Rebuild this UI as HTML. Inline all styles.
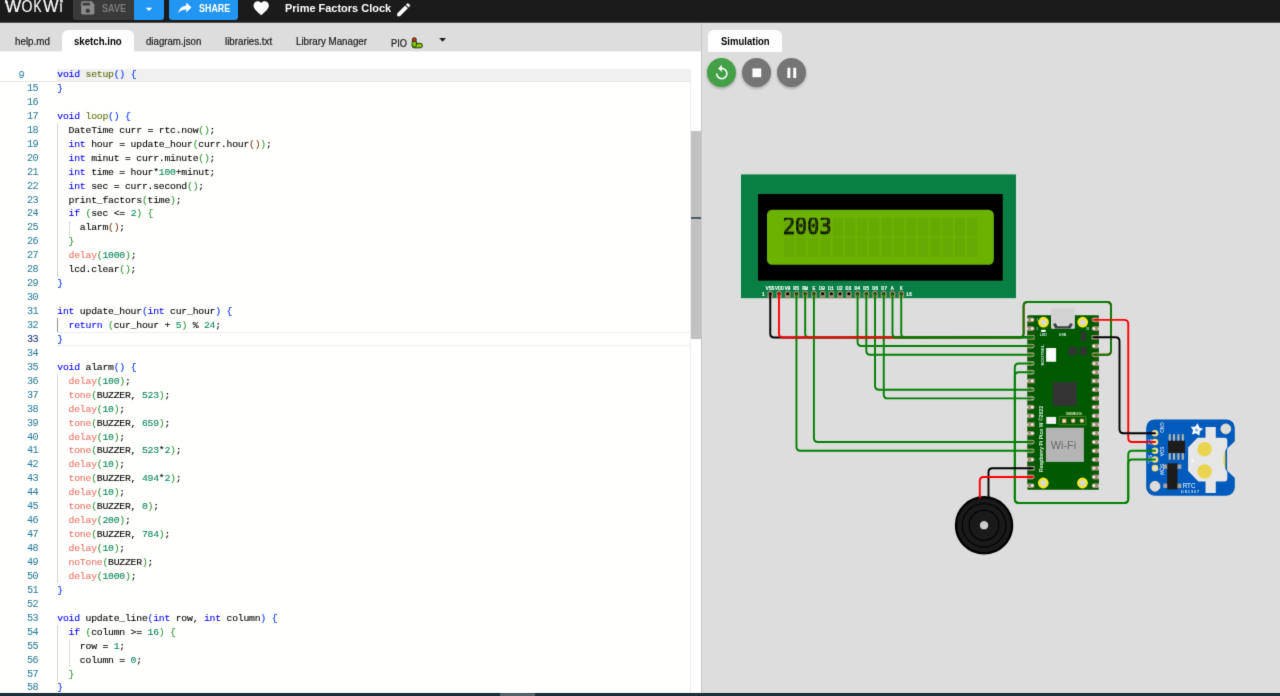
<!DOCTYPE html>
<html lang="en">
<head>
<meta charset="utf-8">
<title>Prime Factors Clock - Wokwi Simulator</title>
<style>
*{box-sizing:border-box}
html,body{margin:0;padding:0;overflow:hidden}
body{width:1280px;height:696px;overflow:hidden;position:relative;background:#fffffe;font-family:"Liberation Sans",sans-serif;color:#000}
#page{position:absolute;left:0;top:0;width:1280px;height:696px;overflow:hidden;filter:url(#soft)}
.abs{position:absolute}
#hdr{left:0;top:0;width:1280px;height:23px;background:#1b1b1b;overflow:hidden;border-bottom:1px solid #4c4c4c}
.btn{top:0;height:19.8px;color:#fff;font-size:10.3px;font-weight:bold;line-height:16px;white-space:nowrap}
#save{left:73.2px;width:60.6px;background:#3a3a3a;border-radius:0 0 0 3px;color:#7b7b7b}
#savedd{left:133.8px;width:29.8px;background:#2196f3;border-radius:0 0 3px 0}
#share{left:169.4px;width:68.6px;background:#2196f3;border-radius:0 0 3px 3px}
#title{left:285.3px;top:0.2px;color:#fff;font-size:11.4px;font-weight:bold;line-height:17px;white-space:nowrap;transform:scaleX(0.963);transform-origin:0 0}
#tabs{left:0;top:23px;width:1280px;height:28px;background:#dddddd;border-top:1px solid #e6e6e6}
.tab{top:30px;height:21.2px}
.tt{-webkit-text-stroke:0.2px;top:32.3px;font-size:10.3px;line-height:20px;color:#1a1a1a;white-space:nowrap;transform-origin:0 0}
.tab.on{background:#fff;border-radius:6px 6px 0 0;height:21.5px;font-weight:bold;color:#000}
#ed{left:0;top:51px;width:701px;height:642px;background:#fffffe;overflow:hidden}
#simbg{left:701px;top:23px;width:579px;height:670px;background:#dddddd;border-left:1px solid #c6c6c6;border-top:1px solid #e6e6e6}
.mono,.ln,.cl,#stk{font-family:"Liberation Mono","DejaVu Sans Mono",monospace;font-size:9.8px;letter-spacing:-0.24px}
.ln{font-size:10.2px;letter-spacing:-0.48px}
.ln{position:absolute;left:0;width:38.2px;text-align:right;color:#237893;height:13.93px;line-height:13.93px;white-space:pre}
.ln.act{color:#0b216f}
.cl{-webkit-text-stroke:0.1px;position:absolute;left:57.3px;height:13.93px;line-height:13.93px;white-space:pre;color:#000}
.k{color:#0000ff}.a{color:#e97366}.o{color:#5e6d03}.n{color:#098658}
.b1{color:#0431fa}.b2{color:#319331}.b3{color:#7b3814}
.ig{position:absolute;width:1px;background:#d8d8d8}
.ig.iga{background:#939393}
#bot{left:0;top:693px;width:1280px;height:3px;background:#1c313a;border-top:1px solid #10252e}
</style>
</head>
<body>
<svg width="0" height="0" style="position:absolute"><defs><filter id="soft" x="0" y="0" width="100%" height="100%" color-interpolation-filters="sRGB"><feConvolveMatrix order="3" kernelMatrix="0.01134 0.08382 0.01134 0.08382 0.61935 0.08382 0.01134 0.08382 0.01134" divisor="1" edgeMode="duplicate" preserveAlpha="true"/></filter></defs></svg>
<div id="page">
<!-- editor -->
<div id="ed" class="abs"></div>
<div class="abs" style="left:57px;top:332px;width:644px;height:14px;border-top:1px solid #eee;border-bottom:1px solid #eee"></div>
<div class="ig" style="left:57.30px;top:123.25px;height:153.34px"></div>
<div class="ig" style="left:68.58px;top:220.83px;height:13.94px"></div>
<div class="ig iga" style="left:57.30px;top:318.41px;height:13.94px"></div>
<div class="ig" style="left:57.30px;top:374.17px;height:209.10px"></div>
<div class="ig" style="left:57.30px;top:625.09px;height:55.76px"></div>
<div class="ig" style="left:68.58px;top:639.03px;height:27.88px"></div>
<div class="ln" style="top:82.03px">15</div>
<div class="cl" style="top:82.03px"><span class="b1">}</span></div>
<div class="ln" style="top:95.97px">16</div>
<div class="ln" style="top:109.91px">17</div>
<div class="cl" style="top:109.91px"><span class="k">void</span> <span class="o">loop</span><span class="b1">(</span><span class="b1">)</span> <span class="b1">{</span></div>
<div class="ln" style="top:123.85px">18</div>
<div class="cl" style="top:123.85px">  DateTime curr = rtc.now<span class="b2">(</span><span class="b2">)</span>;</div>
<div class="ln" style="top:137.79px">19</div>
<div class="cl" style="top:137.79px">  <span class="k">int</span> hour = update_hour<span class="b2">(</span>curr.hour<span class="b3">(</span><span class="b3">)</span><span class="b2">)</span>;</div>
<div class="ln" style="top:151.73px">20</div>
<div class="cl" style="top:151.73px">  <span class="k">int</span> minut = curr.minute<span class="b2">(</span><span class="b2">)</span>;</div>
<div class="ln" style="top:165.67px">21</div>
<div class="cl" style="top:165.67px">  <span class="k">int</span> time = hour*<span class="n">100</span>+minut;</div>
<div class="ln" style="top:179.61px">22</div>
<div class="cl" style="top:179.61px">  <span class="k">int</span> sec = curr.second<span class="b2">(</span><span class="b2">)</span>;</div>
<div class="ln" style="top:193.55px">23</div>
<div class="cl" style="top:193.55px">  print_factors<span class="b2">(</span>time<span class="b2">)</span>;</div>
<div class="ln" style="top:207.49px">24</div>
<div class="cl" style="top:207.49px">  <span class="k">if</span> <span class="b2">(</span>sec &lt;= <span class="n">2</span><span class="b2">)</span> <span class="b2">{</span></div>
<div class="ln" style="top:221.43px">25</div>
<div class="cl" style="top:221.43px">    alarm<span class="b3">(</span><span class="b3">)</span>;</div>
<div class="ln" style="top:235.37px">26</div>
<div class="cl" style="top:235.37px">  <span class="b2">}</span></div>
<div class="ln" style="top:249.31px">27</div>
<div class="cl" style="top:249.31px">  <span class="a">delay</span><span class="b2">(</span><span class="n">1000</span><span class="b2">)</span>;</div>
<div class="ln" style="top:263.25px">28</div>
<div class="cl" style="top:263.25px">  lcd.clear<span class="b2">(</span><span class="b2">)</span>;</div>
<div class="ln" style="top:277.19px">29</div>
<div class="cl" style="top:277.19px"><span class="b1">}</span></div>
<div class="ln" style="top:291.13px">30</div>
<div class="ln" style="top:305.07px">31</div>
<div class="cl" style="top:305.07px"><span class="k">int</span> update_hour<span class="b1">(</span><span class="k">int</span> cur_hour<span class="b1">)</span> <span class="b1">{</span></div>
<div class="ln" style="top:319.01px">32</div>
<div class="cl" style="top:319.01px">  <span class="k">return</span> <span class="b2">(</span>cur_hour + <span class="n">5</span><span class="b2">)</span> % <span class="n">24</span>;</div>
<div class="ln act" style="top:332.95px">33</div>
<div class="cl" style="top:332.95px"><span class="b1">}</span></div>
<div class="ln" style="top:346.89px">34</div>
<div class="ln" style="top:360.83px">35</div>
<div class="cl" style="top:360.83px"><span class="k">void</span> alarm<span class="b1">(</span><span class="b1">)</span> <span class="b1">{</span></div>
<div class="ln" style="top:374.77px">36</div>
<div class="cl" style="top:374.77px">  <span class="a">delay</span><span class="b2">(</span><span class="n">100</span><span class="b2">)</span>;</div>
<div class="ln" style="top:388.71px">37</div>
<div class="cl" style="top:388.71px">  <span class="a">tone</span><span class="b2">(</span>BUZZER, <span class="n">523</span><span class="b2">)</span>;</div>
<div class="ln" style="top:402.65px">38</div>
<div class="cl" style="top:402.65px">  <span class="a">delay</span><span class="b2">(</span><span class="n">10</span><span class="b2">)</span>;</div>
<div class="ln" style="top:416.59px">39</div>
<div class="cl" style="top:416.59px">  <span class="a">tone</span><span class="b2">(</span>BUZZER, <span class="n">659</span><span class="b2">)</span>;</div>
<div class="ln" style="top:430.53px">40</div>
<div class="cl" style="top:430.53px">  <span class="a">delay</span><span class="b2">(</span><span class="n">10</span><span class="b2">)</span>;</div>
<div class="ln" style="top:444.47px">41</div>
<div class="cl" style="top:444.47px">  <span class="a">tone</span><span class="b2">(</span>BUZZER, <span class="n">523</span>*<span class="n">2</span><span class="b2">)</span>;</div>
<div class="ln" style="top:458.41px">42</div>
<div class="cl" style="top:458.41px">  <span class="a">delay</span><span class="b2">(</span><span class="n">10</span><span class="b2">)</span>;</div>
<div class="ln" style="top:472.35px">43</div>
<div class="cl" style="top:472.35px">  <span class="a">tone</span><span class="b2">(</span>BUZZER, <span class="n">494</span>*<span class="n">2</span><span class="b2">)</span>;</div>
<div class="ln" style="top:486.29px">44</div>
<div class="cl" style="top:486.29px">  <span class="a">delay</span><span class="b2">(</span><span class="n">10</span><span class="b2">)</span>;</div>
<div class="ln" style="top:500.23px">45</div>
<div class="cl" style="top:500.23px">  <span class="a">tone</span><span class="b2">(</span>BUZZER, <span class="n">0</span><span class="b2">)</span>;</div>
<div class="ln" style="top:514.17px">46</div>
<div class="cl" style="top:514.17px">  <span class="a">delay</span><span class="b2">(</span><span class="n">200</span><span class="b2">)</span>;</div>
<div class="ln" style="top:528.11px">47</div>
<div class="cl" style="top:528.11px">  <span class="a">tone</span><span class="b2">(</span>BUZZER, <span class="n">784</span><span class="b2">)</span>;</div>
<div class="ln" style="top:542.05px">48</div>
<div class="cl" style="top:542.05px">  <span class="a">delay</span><span class="b2">(</span><span class="n">10</span><span class="b2">)</span>;</div>
<div class="ln" style="top:555.99px">49</div>
<div class="cl" style="top:555.99px">  <span class="a">noTone</span><span class="b2">(</span>BUZZER<span class="b2">)</span>;</div>
<div class="ln" style="top:569.93px">50</div>
<div class="cl" style="top:569.93px">  <span class="a">delay</span><span class="b2">(</span><span class="n">1000</span><span class="b2">)</span>;</div>
<div class="ln" style="top:583.87px">51</div>
<div class="cl" style="top:583.87px"><span class="b1">}</span></div>
<div class="ln" style="top:597.81px">52</div>
<div class="ln" style="top:611.75px">53</div>
<div class="cl" style="top:611.75px"><span class="k">void</span> update_line<span class="b1">(</span><span class="k">int</span> row, <span class="k">int</span> column<span class="b1">)</span> <span class="b1">{</span></div>
<div class="ln" style="top:625.69px">54</div>
<div class="cl" style="top:625.69px">  <span class="k">if</span> <span class="b2">(</span>column &gt;= <span class="n">16</span><span class="b2">)</span> <span class="b2">{</span></div>
<div class="ln" style="top:639.63px">55</div>
<div class="cl" style="top:639.63px">    row = <span class="n">1</span>;</div>
<div class="ln" style="top:653.57px">56</div>
<div class="cl" style="top:653.57px">    column = <span class="n">0</span>;</div>
<div class="ln" style="top:667.51px">57</div>
<div class="cl" style="top:667.51px">  <span class="b2">}</span></div>
<div class="ln" style="top:681.45px">58</div>
<div class="cl" style="top:681.45px"><span class="b1">}</span></div>
<!-- sticky scroll -->
<div class="abs" style="left:0;top:51px;width:701px;height:17.4px;background:#fff"></div>
<div class="abs" style="left:0;top:68.3px;width:690.3px;height:13.6px;background:#fffffe;border-bottom:1px solid #e4e4e4"></div>
<div class="abs" style="left:57.3px;top:69.2px;width:633px;height:12.3px;background:#f0f0f0"></div>
<div class="ln" style="left:0;width:24.2px;top:68.9px">9</div>
<div class="cl" id="stk" style="top:67.9px"><span class="k">void</span> <span class="o">setup</span><span class="b1">(</span><span class="b1">)</span> <span class="b1">{</span></div>
<!-- scrollbar -->
<div class="abs" style="left:690px;top:69px;width:11px;height:624px;background:#fff;border-left:1px solid #ededed"></div>
<div class="abs" style="left:691px;top:131px;width:10px;height:208px;background:#c1c1c1"></div>
<div class="abs" style="left:691px;top:217px;width:10px;height:2px;background:#4b5a60"></div>

<div class="abs" style="left:0;top:51px;width:62px;height:1px;background:#f0f0f0"></div>
<div class="abs" style="left:134px;top:51px;width:567px;height:1px;background:#f0f0f0"></div>
<!-- header -->
<div id="hdr" class="abs">
  <svg class="abs" style="left:0;top:0" width="70" height="22" viewBox="0 0 70 22" font-family="Liberation Sans, sans-serif" font-size="16.8" fill="#fff" stroke="#fff" stroke-width="0.15">
    <text y="12.3"><tspan x="5" textLength="16.18" lengthAdjust="spacingAndGlyphs">W</tspan><tspan x="21.4" textLength="10.98" lengthAdjust="spacingAndGlyphs">O</tspan><tspan x="33.6" textLength="8.07" lengthAdjust="spacingAndGlyphs">K</tspan><tspan x="43.3" textLength="15.22" lengthAdjust="spacingAndGlyphs">W</tspan><tspan x="59.6" textLength="2.98" lengthAdjust="spacingAndGlyphs">i</tspan></text>
    <g stroke="none" fill="#e8e8e8"><circle cx="6.3" cy="1.9" r="1.5"/><circle cx="9.3" cy="11" r="1.5"/><circle cx="13.2" cy="1.3" r="1.3"/><circle cx="16.3" cy="10.3" r="1.4"/><circle cx="61.5" cy="1.3" r="1.4"/></g>
  </svg>
  <div id="save" class="abs btn">
    <svg class="abs" style="left:5.5px;top:-0.6px" width="17.6" height="17.6" viewBox="0 0 24 24"><path fill="#8c8c8c" d="M17 3H5c-1.11 0-2 .9-2 2v14c0 1.1.89 2 2 2h14c1.1 0 2-.9 2-2V7l-4-4zm-5 16c-1.66 0-3-1.34-3-3s1.34-3 3-3 3 1.34 3 3-1.34 3-3 3zm3-10H5V5h10v4z"/></svg>
    <span class="abs" style="left:28.6px;top:0.6px;font-size:10.1px;transform:scaleX(0.905);transform-origin:0 0">SAVE</span>
  </div>
  <div id="savedd" class="abs btn">
    <svg class="abs" style="left:7.4px;top:0.7px" width="16" height="16" viewBox="0 0 24 24"><path fill="#fff" d="M7 10l5 5 5-5z"/></svg>
  </div>
  <div id="share" class="abs btn">
    <svg class="abs" style="left:6.2px;top:-1.2px" width="17.6" height="17" viewBox="0 0 24 24" preserveAspectRatio="none"><path fill="#fff" transform="translate(24,0) scale(-1,1)" d="M10 9V5l-7 7 7 7v-4.1c5 0 8.5 1.6 11 5.1-1-5-4-10-11-11z"/></svg>
    <span class="abs" style="left:30.1px;top:0.6px;font-size:10.1px;transform:scaleX(0.885);transform-origin:0 0">SHARE</span>
  </div>
  <svg class="abs" style="left:252.2px;top:-0.9px" width="18.4" height="18.4" viewBox="0 0 24 24"><path fill="#fff" d="M12 21.35l-1.45-1.32C5.4 15.36 2 12.28 2 8.5 2 5.42 4.42 3 7.5 3c1.74 0 3.41.81 4.5 2.09C13.09 3.81 14.76 3 16.5 3 19.58 3 22 5.42 22 8.5c0 3.78-3.4 6.86-8.55 11.54L12 21.35z"/></svg>
  <div id="title" class="abs">Prime Factors Clock</div>
  <svg class="abs" style="left:394.8px;top:0.6px" width="17.4" height="17.4" viewBox="0 0 24 24"><path fill="#fff" d="M3 17.25V21h3.75L17.81 9.94l-3.75-3.75L3 17.25zM20.71 7.04c.39-.39.39-1.02 0-1.41l-2.34-2.34c-.39-.39-1.02-.39-1.41 0l-1.83 1.83 3.75 3.75 1.83-1.83z"/></svg>
</div>

<!-- tab bar -->
<div id="tabs" class="abs"></div>
<div id="simbg" class="abs"></div>
<div class="tab on abs" style="left:61.8px;width:72.2px"></div>
<div class="tt abs" style="left:15.1px;transform:scaleX(0.955)">help.md</div>
<div class="tt abs" style="left:73.9px;font-weight:bold;color:#000;-webkit-text-stroke:0;transform:scaleX(0.938)">sketch.ino</div>
<div class="tt abs" style="left:145.6px;transform:scaleX(0.938)">diagram.json</div>
<div class="tt abs" style="left:225.1px;transform:scaleX(0.946)">libraries.txt</div>
<div class="tt abs" style="left:295.5px;transform:scaleX(0.947)">Library Manager</div>
<div class="tt abs" style="left:390.6px;top:33.6px;transform:scaleX(0.896)">PIO</div>
<svg class="abs" style="left:410px;top:36px" width="14" height="14" viewBox="410 36 14 14">
  <g stroke="#1d2a08" stroke-width="0.9" stroke-linejoin="round">
  <rect x="412.1" y="43.3" width="10.3" height="4.5" rx="2.2" fill="#76c205"/>
  <rect x="412.1" y="40" width="4.3" height="7" rx="2.1" fill="#76c205"/>
  <circle cx="414.3" cy="39.7" r="2" fill="#e3241b"/>
  </g>
  <rect x="412.6" y="41.9" width="3.3" height="4.6" rx="1.6" fill="#76c205"/>
  <circle cx="417.6" cy="45.8" r="0.6" fill="#d7e84a"/><circle cx="420" cy="45.6" r="0.6" fill="#d7e84a"/><circle cx="414.4" cy="43.2" r="0.5" fill="#d7e84a"/>
</svg>
<svg class="abs" style="left:438px;top:37px" width="10" height="6" viewBox="0 0 10 6"><path d="M1.2 0.9h6.8L4.6 4.7z" fill="#1c1c1c"/></svg>
<div class="tab on abs" style="left:707.8px;width:74.4px"></div>
<div class="tt abs" style="left:721.2px;top:32.4px;font-weight:bold;color:#000;-webkit-text-stroke:0;transform:scaleX(0.925)">Simulation</div>

<!-- sim buttons -->
<div class="abs" style="left:707px;top:58.1px;width:29px;height:29px;border-radius:50%;background:#43a047;box-shadow:0 1.5px 3px rgba(0,0,0,.28)">
  <svg class="abs" style="left:5.7px;top:6px" width="17.6" height="17.6" viewBox="0 0 24 24"><path fill="#fff" d="M12 5V1L7 6l5 5V7c3.31 0 6 2.69 6 6s-2.69 6-6 6-6-2.69-6-6H4c0 4.42 3.58 8 8 8s8-3.58 8-8-3.58-8-8-8z"/></svg>
</div>
<div class="abs" style="left:742.1px;top:58.1px;width:29px;height:29px;border-radius:50%;background:#757575;box-shadow:0 1.5px 3px rgba(0,0,0,.28)">
  <svg class="abs" style="left:5.7px;top:5.7px" width="17.6" height="17.6" viewBox="0 0 24 24"><path fill="#fff" d="M6 6h12v12H6z"/></svg>
</div>
<div class="abs" style="left:777.2px;top:58.1px;width:29px;height:29px;border-radius:50%;background:#757575;box-shadow:0 1.5px 3px rgba(0,0,0,.28)">
  <svg class="abs" style="left:5.7px;top:5.7px" width="17.6" height="17.6" viewBox="0 0 24 24"><path fill="#fff" d="M6 19h4V5H6v14zm8-14v14h4V5h-4z"/></svg>
</div>

<svg class="abs" style="left:702px;top:52px" width="578" height="641" viewBox="702 52 578 641">
<defs><pattern id="lcdcells" width="3.55" height="5.95" patternUnits="userSpaceOnUse" x="12.45" y="12.55"><rect width="2.95" height="5.55" fill="#000" fill-opacity="0.05"/></pattern></defs>
<g transform="translate(741.0,174.4) scale(3.4375)">
<rect width="80" height="36" fill="#087f45"/>
<rect x="4.95" y="5.7" width="71.2" height="25.2" fill="#000"/>
<rect x="7.55" y="10.3" width="66" height="16" rx="1.5" ry="1.5" fill="#6cb201"/>
<rect x="12.45" y="12.55" width="56.2" height="11.5" fill="url(#lcdcells)"/>
<defs><pattern id="lcddots" width="3.55" height="5.95" patternUnits="userSpaceOnUse" x="12.45" y="12.55"><rect x="0.030" y="0.030" width="0.53" height="0.63" fill="#fff"/><rect x="0.620" y="0.030" width="0.53" height="0.63" fill="#fff"/><rect x="1.210" y="0.030" width="0.53" height="0.63" fill="#fff"/><rect x="1.800" y="0.030" width="0.53" height="0.63" fill="#fff"/><rect x="2.390" y="0.030" width="0.53" height="0.63" fill="#fff"/><rect x="0.030" y="0.724" width="0.53" height="0.63" fill="#fff"/><rect x="0.620" y="0.724" width="0.53" height="0.63" fill="#fff"/><rect x="1.210" y="0.724" width="0.53" height="0.63" fill="#fff"/><rect x="1.800" y="0.724" width="0.53" height="0.63" fill="#fff"/><rect x="2.390" y="0.724" width="0.53" height="0.63" fill="#fff"/><rect x="0.030" y="1.418" width="0.53" height="0.63" fill="#fff"/><rect x="0.620" y="1.418" width="0.53" height="0.63" fill="#fff"/><rect x="1.210" y="1.418" width="0.53" height="0.63" fill="#fff"/><rect x="1.800" y="1.418" width="0.53" height="0.63" fill="#fff"/><rect x="2.390" y="1.418" width="0.53" height="0.63" fill="#fff"/><rect x="0.030" y="2.112" width="0.53" height="0.63" fill="#fff"/><rect x="0.620" y="2.112" width="0.53" height="0.63" fill="#fff"/><rect x="1.210" y="2.112" width="0.53" height="0.63" fill="#fff"/><rect x="1.800" y="2.112" width="0.53" height="0.63" fill="#fff"/><rect x="2.390" y="2.112" width="0.53" height="0.63" fill="#fff"/><rect x="0.030" y="2.806" width="0.53" height="0.63" fill="#fff"/><rect x="0.620" y="2.806" width="0.53" height="0.63" fill="#fff"/><rect x="1.210" y="2.806" width="0.53" height="0.63" fill="#fff"/><rect x="1.800" y="2.806" width="0.53" height="0.63" fill="#fff"/><rect x="2.390" y="2.806" width="0.53" height="0.63" fill="#fff"/><rect x="0.030" y="3.500" width="0.53" height="0.63" fill="#fff"/><rect x="0.620" y="3.500" width="0.53" height="0.63" fill="#fff"/><rect x="1.210" y="3.500" width="0.53" height="0.63" fill="#fff"/><rect x="1.800" y="3.500" width="0.53" height="0.63" fill="#fff"/><rect x="2.390" y="3.500" width="0.53" height="0.63" fill="#fff"/><rect x="0.030" y="4.194" width="0.53" height="0.63" fill="#fff"/><rect x="0.620" y="4.194" width="0.53" height="0.63" fill="#fff"/><rect x="1.210" y="4.194" width="0.53" height="0.63" fill="#fff"/><rect x="1.800" y="4.194" width="0.53" height="0.63" fill="#fff"/><rect x="2.390" y="4.194" width="0.53" height="0.63" fill="#fff"/><rect x="0.030" y="4.888" width="0.53" height="0.63" fill="#fff"/><rect x="0.620" y="4.888" width="0.53" height="0.63" fill="#fff"/><rect x="1.210" y="4.888" width="0.53" height="0.63" fill="#fff"/><rect x="1.800" y="4.888" width="0.53" height="0.63" fill="#fff"/><rect x="2.390" y="4.888" width="0.53" height="0.63" fill="#fff"/></pattern>
<mask id="lcdmask" maskUnits="userSpaceOnUse" x="12" y="12" width="58" height="13"><rect x="12.45" y="12.55" width="56.8" height="11.9" fill="url(#lcddots)"/></mask></defs>
<g mask="url(#lcdmask)"><text transform="scale(0.9,1)" x="13.467 17.411 21.356 25.300" y="17.42" font-family="DejaVu Sans Mono, Liberation Mono, monospace" font-size="6.7" fill="#000" stroke="#000" stroke-width="0.3">2003</text></g>
<path fill="#9a8c68" d="M7.670,34.370c0,0 0.21,-0.52 0.87,-0.52 0.67,0 0.81,0.51 0.81,0.51V36h-1.68z"/>
<circle cx="8.510" cy="34.720" r="0.45" fill="#000"/>
<path fill="#9a8c68" d="M10.210,34.370c0,0 0.21,-0.52 0.87,-0.52 0.67,0 0.81,0.51 0.81,0.51V36h-1.68z"/>
<circle cx="11.050" cy="34.720" r="0.45" fill="#000"/>
<path fill="#9a8c68" d="M12.750,34.370c0,0 0.21,-0.52 0.87,-0.52 0.67,0 0.81,0.51 0.81,0.51V36h-1.68z"/>
<circle cx="13.590" cy="34.720" r="0.45" fill="#000"/>
<path fill="#9a8c68" d="M15.290,34.370c0,0 0.21,-0.52 0.87,-0.52 0.67,0 0.81,0.51 0.81,0.51V36h-1.68z"/>
<circle cx="16.130" cy="34.720" r="0.45" fill="#000"/>
<path fill="#9a8c68" d="M17.830,34.370c0,0 0.21,-0.52 0.87,-0.52 0.67,0 0.81,0.51 0.81,0.51V36h-1.68z"/>
<circle cx="18.670" cy="34.720" r="0.45" fill="#000"/>
<path fill="#9a8c68" d="M20.370,34.370c0,0 0.21,-0.52 0.87,-0.52 0.67,0 0.81,0.51 0.81,0.51V36h-1.68z"/>
<circle cx="21.210" cy="34.720" r="0.45" fill="#000"/>
<path fill="#9a8c68" d="M22.910,34.370c0,0 0.21,-0.52 0.87,-0.52 0.67,0 0.81,0.51 0.81,0.51V36h-1.68z"/>
<circle cx="23.750" cy="34.720" r="0.45" fill="#000"/>
<path fill="#9a8c68" d="M25.450,34.370c0,0 0.21,-0.52 0.87,-0.52 0.67,0 0.81,0.51 0.81,0.51V36h-1.68z"/>
<circle cx="26.290" cy="34.720" r="0.45" fill="#000"/>
<path fill="#9a8c68" d="M27.990,34.370c0,0 0.21,-0.52 0.87,-0.52 0.67,0 0.81,0.51 0.81,0.51V36h-1.68z"/>
<circle cx="28.830" cy="34.720" r="0.45" fill="#000"/>
<path fill="#9a8c68" d="M30.530,34.370c0,0 0.21,-0.52 0.87,-0.52 0.67,0 0.81,0.51 0.81,0.51V36h-1.68z"/>
<circle cx="31.370" cy="34.720" r="0.45" fill="#000"/>
<path fill="#9a8c68" d="M33.070,34.370c0,0 0.21,-0.52 0.87,-0.52 0.67,0 0.81,0.51 0.81,0.51V36h-1.68z"/>
<circle cx="33.910" cy="34.720" r="0.45" fill="#000"/>
<path fill="#9a8c68" d="M35.610,34.370c0,0 0.21,-0.52 0.87,-0.52 0.67,0 0.81,0.51 0.81,0.51V36h-1.68z"/>
<circle cx="36.450" cy="34.720" r="0.45" fill="#000"/>
<path fill="#9a8c68" d="M38.150,34.370c0,0 0.21,-0.52 0.87,-0.52 0.67,0 0.81,0.51 0.81,0.51V36h-1.68z"/>
<circle cx="38.990" cy="34.720" r="0.45" fill="#000"/>
<path fill="#9a8c68" d="M40.690,34.370c0,0 0.21,-0.52 0.87,-0.52 0.67,0 0.81,0.51 0.81,0.51V36h-1.68z"/>
<circle cx="41.530" cy="34.720" r="0.45" fill="#000"/>
<path fill="#9a8c68" d="M43.230,34.370c0,0 0.21,-0.52 0.87,-0.52 0.67,0 0.81,0.51 0.81,0.51V36h-1.68z"/>
<circle cx="44.070" cy="34.720" r="0.45" fill="#000"/>
<path fill="#9a8c68" d="M45.770,34.370c0,0 0.21,-0.52 0.87,-0.52 0.67,0 0.81,0.51 0.81,0.51V36h-1.68z"/>
<circle cx="46.610" cy="34.720" r="0.45" fill="#000"/>
<g font-family="Liberation Mono, DejaVu Sans Mono, monospace" font-size="1.42" fill="#fff" stroke="#fff" stroke-width="0.07">
<text x="7.2" y="33.55">VSS</text>
<text x="9.9" y="33.55">VDD</text>
<text x="12.7" y="33.55">V0</text>
<text x="15.2" y="33.55">RS</text>
<text x="17.8" y="33.55">RW</text>
<text x="20.8" y="33.55">E</text>
<text x="22.7" y="33.55">D0</text>
<text x="25.3" y="33.55">D1</text>
<text x="27.9" y="33.55">D2</text>
<text x="30.4" y="33.55">D3</text>
<text x="33" y="33.55">D4</text>
<text x="35.6" y="33.55">D5</text>
<text x="38.2" y="33.55">D6</text>
<text x="40.8" y="33.55">D7</text>
<text x="43.6" y="33.55">A</text>
<text x="46.2" y="33.55">K</text>
<text x="6" y="35.45">1</text><text x="48" y="35.45">16</text>
</g></g>
<g>
<rect x="1027.3" y="315.2" width="71.60" height="174.50" rx="1.2" fill="#015901"/>
<path d="M1027.3,317.45h5a2.4,2.4 0 0 1 0,4.8h-5z" fill="#a08e70"/>
<path d="M1098.9,317.45h-5a2.4,2.4 0 0 0 0,4.8h5z" fill="#a08e70"/>
<circle cx="1032.20" cy="319.85" r="1.35" fill="#f2f2f2"/>
<circle cx="1094.00" cy="319.85" r="1.35" fill="#f2f2f2"/>
<circle cx="1027.10" cy="319.85" r="1.2" fill="#dddddd"/>
<circle cx="1099.10" cy="319.85" r="1.2" fill="#dddddd"/>
<path d="M1027.3,326.18h5a2.4,2.4 0 0 1 0,4.8h-5z" fill="#a08e70"/>
<path d="M1098.9,326.18h-5a2.4,2.4 0 0 0 0,4.8h5z" fill="#a08e70"/>
<circle cx="1032.20" cy="328.58" r="1.35" fill="#f2f2f2"/>
<circle cx="1094.00" cy="328.58" r="1.35" fill="#f2f2f2"/>
<circle cx="1027.10" cy="328.58" r="1.2" fill="#dddddd"/>
<circle cx="1099.10" cy="328.58" r="1.2" fill="#dddddd"/>
<rect x="1027.3" y="334.91" width="7.4" height="4.8" fill="#a08e70"/>
<rect x="1091.50" y="334.91" width="7.4" height="4.8" fill="#a08e70"/>
<circle cx="1032.20" cy="337.31" r="1.35" fill="#f2f2f2"/>
<circle cx="1094.00" cy="337.31" r="1.35" fill="#f2f2f2"/>
<circle cx="1027.10" cy="337.31" r="1.2" fill="#dddddd"/>
<circle cx="1099.10" cy="337.31" r="1.2" fill="#dddddd"/>
<path d="M1027.3,343.64h5a2.4,2.4 0 0 1 0,4.8h-5z" fill="#a08e70"/>
<path d="M1098.9,343.64h-5a2.4,2.4 0 0 0 0,4.8h5z" fill="#a08e70"/>
<circle cx="1032.20" cy="346.04" r="1.35" fill="#f2f2f2"/>
<circle cx="1094.00" cy="346.04" r="1.35" fill="#f2f2f2"/>
<circle cx="1027.10" cy="346.04" r="1.2" fill="#dddddd"/>
<circle cx="1099.10" cy="346.04" r="1.2" fill="#dddddd"/>
<path d="M1027.3,352.37h5a2.4,2.4 0 0 1 0,4.8h-5z" fill="#a08e70"/>
<path d="M1098.9,352.37h-5a2.4,2.4 0 0 0 0,4.8h5z" fill="#a08e70"/>
<circle cx="1032.20" cy="354.77" r="1.35" fill="#f2f2f2"/>
<circle cx="1094.00" cy="354.77" r="1.35" fill="#f2f2f2"/>
<circle cx="1027.10" cy="354.77" r="1.2" fill="#dddddd"/>
<circle cx="1099.10" cy="354.77" r="1.2" fill="#dddddd"/>
<path d="M1027.3,361.10h5a2.4,2.4 0 0 1 0,4.8h-5z" fill="#a08e70"/>
<path d="M1098.9,361.10h-5a2.4,2.4 0 0 0 0,4.8h5z" fill="#a08e70"/>
<circle cx="1032.20" cy="363.50" r="1.35" fill="#f2f2f2"/>
<circle cx="1094.00" cy="363.50" r="1.35" fill="#f2f2f2"/>
<circle cx="1027.10" cy="363.50" r="1.2" fill="#dddddd"/>
<circle cx="1099.10" cy="363.50" r="1.2" fill="#dddddd"/>
<path d="M1027.3,369.83h5a2.4,2.4 0 0 1 0,4.8h-5z" fill="#a08e70"/>
<path d="M1098.9,369.83h-5a2.4,2.4 0 0 0 0,4.8h5z" fill="#a08e70"/>
<circle cx="1032.20" cy="372.23" r="1.35" fill="#f2f2f2"/>
<circle cx="1094.00" cy="372.23" r="1.35" fill="#f2f2f2"/>
<circle cx="1027.10" cy="372.23" r="1.2" fill="#dddddd"/>
<circle cx="1099.10" cy="372.23" r="1.2" fill="#dddddd"/>
<rect x="1027.3" y="378.56" width="7.4" height="4.8" fill="#a08e70"/>
<rect x="1091.50" y="378.56" width="7.4" height="4.8" fill="#a08e70"/>
<circle cx="1032.20" cy="380.96" r="1.35" fill="#f2f2f2"/>
<circle cx="1094.00" cy="380.96" r="1.35" fill="#f2f2f2"/>
<circle cx="1027.10" cy="380.96" r="1.2" fill="#dddddd"/>
<circle cx="1099.10" cy="380.96" r="1.2" fill="#dddddd"/>
<path d="M1027.3,387.29h5a2.4,2.4 0 0 1 0,4.8h-5z" fill="#a08e70"/>
<path d="M1098.9,387.29h-5a2.4,2.4 0 0 0 0,4.8h5z" fill="#a08e70"/>
<circle cx="1032.20" cy="389.69" r="1.35" fill="#f2f2f2"/>
<circle cx="1094.00" cy="389.69" r="1.35" fill="#f2f2f2"/>
<circle cx="1027.10" cy="389.69" r="1.2" fill="#dddddd"/>
<circle cx="1099.10" cy="389.69" r="1.2" fill="#dddddd"/>
<path d="M1027.3,396.02h5a2.4,2.4 0 0 1 0,4.8h-5z" fill="#a08e70"/>
<path d="M1098.9,396.02h-5a2.4,2.4 0 0 0 0,4.8h5z" fill="#a08e70"/>
<circle cx="1032.20" cy="398.42" r="1.35" fill="#f2f2f2"/>
<circle cx="1094.00" cy="398.42" r="1.35" fill="#f2f2f2"/>
<circle cx="1027.10" cy="398.42" r="1.2" fill="#dddddd"/>
<circle cx="1099.10" cy="398.42" r="1.2" fill="#dddddd"/>
<path d="M1027.3,404.75h5a2.4,2.4 0 0 1 0,4.8h-5z" fill="#a08e70"/>
<path d="M1098.9,404.75h-5a2.4,2.4 0 0 0 0,4.8h5z" fill="#a08e70"/>
<circle cx="1032.20" cy="407.15" r="1.35" fill="#f2f2f2"/>
<circle cx="1094.00" cy="407.15" r="1.35" fill="#f2f2f2"/>
<circle cx="1027.10" cy="407.15" r="1.2" fill="#dddddd"/>
<circle cx="1099.10" cy="407.15" r="1.2" fill="#dddddd"/>
<path d="M1027.3,413.48h5a2.4,2.4 0 0 1 0,4.8h-5z" fill="#a08e70"/>
<path d="M1098.9,413.48h-5a2.4,2.4 0 0 0 0,4.8h5z" fill="#a08e70"/>
<circle cx="1032.20" cy="415.88" r="1.35" fill="#f2f2f2"/>
<circle cx="1094.00" cy="415.88" r="1.35" fill="#f2f2f2"/>
<circle cx="1027.10" cy="415.88" r="1.2" fill="#dddddd"/>
<circle cx="1099.10" cy="415.88" r="1.2" fill="#dddddd"/>
<rect x="1027.3" y="422.21" width="7.4" height="4.8" fill="#a08e70"/>
<rect x="1091.50" y="422.21" width="7.4" height="4.8" fill="#a08e70"/>
<circle cx="1032.20" cy="424.61" r="1.35" fill="#f2f2f2"/>
<circle cx="1094.00" cy="424.61" r="1.35" fill="#f2f2f2"/>
<circle cx="1027.10" cy="424.61" r="1.2" fill="#dddddd"/>
<circle cx="1099.10" cy="424.61" r="1.2" fill="#dddddd"/>
<path d="M1027.3,430.94h5a2.4,2.4 0 0 1 0,4.8h-5z" fill="#a08e70"/>
<path d="M1098.9,430.94h-5a2.4,2.4 0 0 0 0,4.8h5z" fill="#a08e70"/>
<circle cx="1032.20" cy="433.34" r="1.35" fill="#f2f2f2"/>
<circle cx="1094.00" cy="433.34" r="1.35" fill="#f2f2f2"/>
<circle cx="1027.10" cy="433.34" r="1.2" fill="#dddddd"/>
<circle cx="1099.10" cy="433.34" r="1.2" fill="#dddddd"/>
<path d="M1027.3,439.67h5a2.4,2.4 0 0 1 0,4.8h-5z" fill="#a08e70"/>
<path d="M1098.9,439.67h-5a2.4,2.4 0 0 0 0,4.8h5z" fill="#a08e70"/>
<circle cx="1032.20" cy="442.07" r="1.35" fill="#f2f2f2"/>
<circle cx="1094.00" cy="442.07" r="1.35" fill="#f2f2f2"/>
<circle cx="1027.10" cy="442.07" r="1.2" fill="#dddddd"/>
<circle cx="1099.10" cy="442.07" r="1.2" fill="#dddddd"/>
<path d="M1027.3,448.40h5a2.4,2.4 0 0 1 0,4.8h-5z" fill="#a08e70"/>
<path d="M1098.9,448.40h-5a2.4,2.4 0 0 0 0,4.8h5z" fill="#a08e70"/>
<circle cx="1032.20" cy="450.80" r="1.35" fill="#f2f2f2"/>
<circle cx="1094.00" cy="450.80" r="1.35" fill="#f2f2f2"/>
<circle cx="1027.10" cy="450.80" r="1.2" fill="#dddddd"/>
<circle cx="1099.10" cy="450.80" r="1.2" fill="#dddddd"/>
<path d="M1027.3,457.13h5a2.4,2.4 0 0 1 0,4.8h-5z" fill="#a08e70"/>
<path d="M1098.9,457.13h-5a2.4,2.4 0 0 0 0,4.8h5z" fill="#a08e70"/>
<circle cx="1032.20" cy="459.53" r="1.35" fill="#f2f2f2"/>
<circle cx="1094.00" cy="459.53" r="1.35" fill="#f2f2f2"/>
<circle cx="1027.10" cy="459.53" r="1.2" fill="#dddddd"/>
<circle cx="1099.10" cy="459.53" r="1.2" fill="#dddddd"/>
<rect x="1027.3" y="465.86" width="7.4" height="4.8" fill="#a08e70"/>
<rect x="1091.50" y="465.86" width="7.4" height="4.8" fill="#a08e70"/>
<circle cx="1032.20" cy="468.26" r="1.35" fill="#f2f2f2"/>
<circle cx="1094.00" cy="468.26" r="1.35" fill="#f2f2f2"/>
<circle cx="1027.10" cy="468.26" r="1.2" fill="#dddddd"/>
<circle cx="1099.10" cy="468.26" r="1.2" fill="#dddddd"/>
<path d="M1027.3,474.59h5a2.4,2.4 0 0 1 0,4.8h-5z" fill="#a08e70"/>
<path d="M1098.9,474.59h-5a2.4,2.4 0 0 0 0,4.8h5z" fill="#a08e70"/>
<circle cx="1032.20" cy="476.99" r="1.35" fill="#f2f2f2"/>
<circle cx="1094.00" cy="476.99" r="1.35" fill="#f2f2f2"/>
<circle cx="1027.10" cy="476.99" r="1.2" fill="#dddddd"/>
<circle cx="1099.10" cy="476.99" r="1.2" fill="#dddddd"/>
<path d="M1027.3,483.32h5a2.4,2.4 0 0 1 0,4.8h-5z" fill="#a08e70"/>
<path d="M1098.9,483.32h-5a2.4,2.4 0 0 0 0,4.8h5z" fill="#a08e70"/>
<circle cx="1032.20" cy="485.72" r="1.35" fill="#f2f2f2"/>
<circle cx="1094.00" cy="485.72" r="1.35" fill="#f2f2f2"/>
<circle cx="1027.10" cy="485.72" r="1.2" fill="#dddddd"/>
<circle cx="1099.10" cy="485.72" r="1.2" fill="#dddddd"/>
<rect x="1051" y="308.4" width="23.9" height="20.4" rx="0.8" fill="#d2d2d2"/>
<path d="M1053,324.3 l2.4,-1.3 2.2,3.2 h10.6 l2.2,-3.2 2.4,1.3 -2.3,4.3 h-15.2z" fill="#3b3f4a"/>
<circle cx="1043.5" cy="322.2" r="4.2" fill="#d6d6dc" stroke="#f5e821" stroke-width="2.4"/>
<circle cx="1082.7" cy="322.2" r="4.2" fill="#d6d6dc" stroke="#f5e821" stroke-width="2.4"/>
<circle cx="1043.3" cy="483" r="4.2" fill="#d6d6dc" stroke="#f5e821" stroke-width="2.4"/>
<circle cx="1082.5" cy="483" r="4.2" fill="#d6d6dc" stroke="#f5e821" stroke-width="2.4"/>
<rect x="1040.9" y="329.8" width="5" height="2.1" rx="0.9" fill="#f4f4f4"/>
<rect x="1081" y="332" width="5" height="8.5" fill="#333"/>
<rect x="1068.8" y="347" width="8" height="8.2" fill="#333"/>
<rect x="1080.1" y="347" width="6.8" height="8.2" fill="#333"/>
<rect x="1046.1" y="348" width="10" height="13.8" rx="0.6" fill="#fafafa"/>
<ellipse cx="1051.1" cy="354.9" rx="4" ry="4.6" fill="#fff"/>
<rect x="1052.7" y="382.2" width="23.9" height="23.7" fill="#343434"/>
<rect x="1059.2" y="416.4" width="26.7" height="8.4" rx="0.6" fill="none" stroke="#5d8a34" stroke-width="0.8"/>
<rect x="1062" y="418.7" width="4.4" height="4.4" fill="#d9a95f"/><rect x="1063.1" y="419.8" width="2.2" height="2.2" fill="#e8e8e8"/>
<circle cx="1073.2" cy="420.8" r="2.3" fill="#d9a95f"/><circle cx="1073.2" cy="420.8" r="1.2" fill="#e8e8e8"/>
<circle cx="1081.9" cy="420.8" r="2.3" fill="#d9a95f"/><circle cx="1081.9" cy="420.8" r="1.2" fill="#e8e8e8"/>
<rect x="1046.3" y="416.9" width="9.8" height="7" fill="#f1f1f1"/>
<rect x="1045.9" y="427.7" width="38" height="34.2" fill="#b4b4b4"/>
<g font-family="Liberation Sans, sans-serif">
<text x="1063.5" y="448.9" font-size="10.9" fill="#6a6a6a" text-anchor="middle">Wi-Fi</text>
<g fill="#cfe8d0" font-size="2.9" font-weight="bold">
<text x="1043.3" y="336.1" text-anchor="middle" font-size="3.6" fill="#bfe6d8">LED</text>
<text x="1062.6" y="336.1" text-anchor="middle" font-size="3.6" fill="#bfe6d8">USB</text>
<text x="1036.4" y="320.9" fill="#9fd8c8">1</text><text x="1036.4" y="329.6" fill="#9fd8c8">2</text><text x="1086" y="329.6" fill="#9fd8c8">39</text>
<text x="1074" y="414.6" text-anchor="middle" font-size="4.3" fill="#e3e6b8">DEBUG</text>
<text transform="translate(1044.3,365.6) rotate(-90)" font-size="4.4" fill="#bfe6d8">BOOTSEL</text>
</g>
<text transform="translate(1042.6,472) rotate(-90)" font-size="5.6" font-weight="bold" fill="#dff3e6" textLength="66" lengthAdjust="spacingAndGlyphs">Raspberry Pi Pico W ©2022</text>
</g></g>
<g>
<path fill="#015bbd" d="M1154.6000000000001,419.4H1226.3999999999999a8.4,8.4 0 0 1 8.4,8.4V441.3L1227.8,448.1Q1227.1,448.8 1227.1,449.9V469.5Q1227.1,470.6 1227.8,471.3L1234.8,478.1V487.35a8.4,8.4 0 0 1 -8.4,8.4H1154.6000000000001a8.4,8.4 0 0 1 -8.4,-8.4V427.79999999999995a8.4,8.4 0 0 1 8.4,-8.4z"/>
<circle cx="1225.8" cy="428.9" r="4.9" fill="#dcdcdc" stroke="#f6e3b4" stroke-width="0.9"/>
<circle cx="1155.0" cy="486.3" r="4.9" fill="#dcdcdc" stroke="#f6e3b4" stroke-width="0.9"/>
<rect x="1221" y="448.8" width="4.4" height="21.8" fill="#e9d54d"/>
<path fill="#e6e6e6" d="M1205.5,426.9h10.3v10.8h8.5q3,0 3,3V447.3A20.8,20.8 0 0 0 1227.3,472V478.4q0,3 -3,3h-8.5v11.7h-10.3v-11.7h-7.1l-10.3,-10.3v-23.6l9.4,-9.8h8z"/>
<circle cx="1204.6" cy="449.2" r="7.2" fill="#e9d54d"/><circle cx="1204.6" cy="471.4" r="7.2" fill="#e9d54d"/>
<path d="M1192.6,458.8v3.6M1190.8,460.6h3.6" stroke="#fff" stroke-width="0.7" fill="none"/>
<polygon points="1197.75,423.30 1199.12,427.37 1203.14,428.88 1199.69,431.44 1199.49,435.73 1195.99,433.25 1191.85,434.38 1193.13,430.29 1190.77,426.70 1195.07,426.65" fill="#fff"/>
<circle cx="1196.6" cy="430" r="1.8" fill="#8fb8e8"/>
<rect x="1168.70" y="434.2" width="2" height="25.5" fill="#bdb8a4"/>
<rect x="1173.00" y="434.2" width="2" height="25.5" fill="#bdb8a4"/>
<rect x="1177.40" y="434.2" width="2" height="25.5" fill="#bdb8a4"/>
<rect x="1181.80" y="434.2" width="2" height="25.5" fill="#bdb8a4"/>
<rect x="1168" y="440.7" width="17" height="12.4" fill="#1c1c1c"/>
<rect x="1163.3" y="464.5" width="18" height="4.3" fill="#a3a3a3"/>
<rect x="1163.3" y="483.6" width="18" height="4.4" fill="#a3a3a3"/>
<rect x="1167.2" y="463.4" width="10.3" height="26" fill="#1c1c1c"/>
<circle cx="1155" cy="433.25" r="2.6" fill="#dcdde4" stroke="#f5dc74" stroke-width="1.4"/>
<circle cx="1155" cy="441.98" r="2.6" fill="#dcdde4" stroke="#f5dc74" stroke-width="1.4"/>
<circle cx="1155" cy="450.71" r="2.6" fill="#dcdde4" stroke="#f5dc74" stroke-width="1.4"/>
<circle cx="1155" cy="459.44" r="2.6" fill="#dcdde4" stroke="#f5dc74" stroke-width="1.4"/>
<circle cx="1155" cy="468.17" r="2.6" fill="#dcdde4" stroke="#f5dc74" stroke-width="1.4"/>
<g font-family="Liberation Sans, sans-serif" fill="#fff">
<text transform="translate(1159.7,427.4) rotate(90)" font-size="4.7" text-anchor="middle">GND</text>
<text transform="translate(1148.4,442.1) rotate(90)" font-size="4.7" text-anchor="middle">5V</text>
<text transform="translate(1159.7,451.3) rotate(90)" font-size="4.7" text-anchor="middle">SDA</text>
<text transform="translate(1148.4,459.2) rotate(90)" font-size="4.7" text-anchor="middle">SCL</text>
<text transform="translate(1159.7,469.4) rotate(90)" font-size="4.7" text-anchor="middle">SQW</text>
<text x="1182.7" y="487.6" font-size="7.3" textLength="12.7" lengthAdjust="spacingAndGlyphs">RTC</text>
<text x="1180.8" y="493.3" font-size="4.3" letter-spacing="0.55">DS1307</text>
</g></g>
<g transform="translate(1013.28,554.52) rotate(180) scale(3.4375)">
<g stroke="#000"><ellipse cx="8.5" cy="8.5" rx="8.15" ry="8.15" fill="#1a1a1a" stroke-width=".7"/>
<circle cx="8.5" cy="8.5" r="6.3472" fill="none" stroke-width=".3"/><circle cx="8.5" cy="8.5" r="4.3488" fill="none" stroke-width=".3"/>
<circle cx="8.5" cy="8.5" r="1.3744" fill="#ccc" stroke-width=".25"/></g></g>
<path d="M770.25,293.75L770.25,333.50Q770.25,337.50 774.25,337.50L1032.90,337.31" fill="none" stroke="#000000" stroke-width="1.9" stroke-linecap="round" stroke-linejoin="round"/>
<path d="M805.18,293.75L805.18,333.50Q805.18,337.50 809.18,337.50L1032.90,337.31" fill="none" stroke="#008000" stroke-width="1.9" stroke-linecap="round" stroke-linejoin="round"/>
<path d="M796.45,293.75L796.45,446.80Q796.45,450.80 800.45,450.80L1032.90,450.80" fill="none" stroke="#008000" stroke-width="1.9" stroke-linecap="round" stroke-linejoin="round"/>
<path d="M813.91,293.75L813.91,438.07Q813.91,442.07 817.91,442.07L1032.90,442.07" fill="none" stroke="#008000" stroke-width="1.9" stroke-linecap="round" stroke-linejoin="round"/>
<path d="M857.57,293.75L857.57,342.04Q857.57,346.04 861.57,346.04L1032.90,346.04" fill="none" stroke="#008000" stroke-width="1.9" stroke-linecap="round" stroke-linejoin="round"/>
<path d="M866.30,293.75L866.30,350.77Q866.30,354.77 870.30,354.77L1032.90,354.77" fill="none" stroke="#008000" stroke-width="1.9" stroke-linecap="round" stroke-linejoin="round"/>
<path d="M875.03,293.75L875.03,385.69Q875.03,389.69 879.03,389.69L1032.90,389.69" fill="none" stroke="#008000" stroke-width="1.9" stroke-linecap="round" stroke-linejoin="round"/>
<path d="M883.76,293.75L883.76,394.42Q883.76,398.42 887.76,398.42L1032.90,398.42" fill="none" stroke="#008000" stroke-width="1.9" stroke-linecap="round" stroke-linejoin="round"/>
<path d="M778.98,293.75L778.98,333.50Q778.98,337.50 782.98,337.50L1019.60,337.50Q1023.60,337.50 1023.60,333.50L1023.60,306.00Q1023.60,302.00 1027.60,302.00L1107.00,302.00Q1111.00,302.00 1111.00,306.00L1111.00,350.77Q1111.00,354.77 1107.00,354.77L1093.30,354.77" fill="none" stroke="#ff0000" stroke-width="1.9" stroke-linecap="round" stroke-linejoin="round"/>
<path d="M892.49,293.75L892.49,333.50Q892.49,337.50 896.49,337.50L1019.60,337.50Q1023.60,337.50 1023.60,333.50L1023.60,306.00Q1023.60,302.00 1027.60,302.00L1107.00,302.00Q1111.00,302.00 1111.00,306.00L1111.00,350.77Q1111.00,354.77 1107.00,354.77L1093.30,354.77" fill="none" stroke="#008000" stroke-width="1.9" stroke-linecap="round" stroke-linejoin="round"/>
<path d="M901.22,293.75L901.22,333.50Q901.22,337.50 905.22,337.49L1032.90,337.31" fill="none" stroke="#008000" stroke-width="1.9" stroke-linecap="round" stroke-linejoin="round"/>
<path d="M1032.90,363.50L1018.80,363.50Q1014.80,363.50 1014.80,367.50L1014.80,499.00Q1014.80,503.00 1018.80,503.00L1124.25,503.00Q1128.25,503.00 1128.25,499.00L1128.25,454.71Q1128.25,450.71 1132.25,450.71L1155.00,450.71" fill="none" stroke="#008000" stroke-width="1.9" stroke-linecap="round" stroke-linejoin="round"/>
<path d="M1032.90,372.23L1018.80,372.23Q1014.80,372.23 1014.80,376.23L1014.80,499.00Q1014.80,503.00 1018.80,503.00L1124.25,503.00Q1128.25,503.00 1128.25,499.00L1128.25,463.44Q1128.25,459.44 1132.25,459.44L1155.00,459.44" fill="none" stroke="#008000" stroke-width="1.9" stroke-linecap="round" stroke-linejoin="round"/>
<path d="M1032.90,468.26L992.50,468.26Q988.50,468.26 988.50,472.26L988.50,497.50" fill="none" stroke="#000000" stroke-width="1.9" stroke-linecap="round" stroke-linejoin="round"/>
<path d="M1032.90,476.99L983.80,476.99Q979.80,476.99 979.80,480.99L979.80,497.50" fill="none" stroke="#ff0000" stroke-width="1.9" stroke-linecap="round" stroke-linejoin="round"/>
<path d="M1093.30,319.85L1124.25,319.85Q1128.25,319.85 1128.25,323.85L1128.25,437.98Q1128.25,441.98 1132.25,441.98L1155.00,441.98" fill="none" stroke="#ff0000" stroke-width="1.9" stroke-linecap="round" stroke-linejoin="round"/>
<path d="M1093.30,337.31L1115.50,337.31Q1119.50,337.31 1119.50,341.31L1119.50,429.25Q1119.50,433.25 1123.50,433.25L1155.00,433.25" fill="none" stroke="#000000" stroke-width="1.9" stroke-linecap="round" stroke-linejoin="round"/>
</svg>

<!-- bottom strip -->
<div id="bot" class="abs"></div>
<div class="abs" style="left:500px;top:693px;width:35px;height:3px;background:#545f66;border-top:1px solid #48535a"></div>
</div>
</body>
</html>
